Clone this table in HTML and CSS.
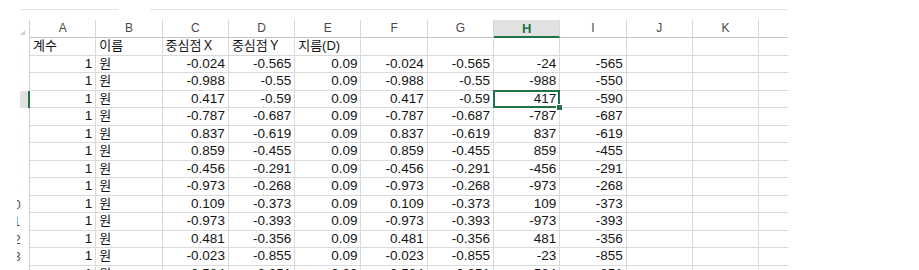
FILE: index.html
```html
<!DOCTYPE html>
<html lang="ko">
<head>
<meta charset="utf-8">
<title>Sheet</title>
<link rel="stylesheet" href="styles.css">
</head>
<body>
<div class="sheet">
  <div class="topbar"><span class="tline first"></span><span class="tline second"></span></div>
  <div class="grid">
    <div class="corner"><span class="tri"></span></div>
    <div class="ch">A</div><div class="ch">B</div><div class="ch">C</div><div class="ch">D</div><div class="ch">E</div><div class="ch">F</div><div class="ch">G</div><div class="ch sel">H</div><div class="ch">I</div><div class="ch">J</div><div class="ch">K</div><div class="ch"></div>

    <div class="rh">1</div><div class="c t">계수</div><div class="c t">이름</div><div class="c t">중심점Ｘ</div><div class="c t">중심점Ｙ</div><div class="c t">지름(D)</div><div class="c"></div><div class="c"></div><div class="c colsel"></div><div class="c"></div><div class="c"></div><div class="c"></div><div class="c"></div>

    <div class="rh">2</div><div class="c n">1</div><div class="c t">원</div><div class="c n">-0.024</div><div class="c n">-0.565</div><div class="c n">0.09</div><div class="c n">-0.024</div><div class="c n">-0.565</div><div class="c n">-24</div><div class="c n">-565</div><div class="c"></div><div class="c"></div><div class="c"></div>

    <div class="rh">3</div><div class="c n">1</div><div class="c t">원</div><div class="c n">-0.988</div><div class="c n">-0.55</div><div class="c n">0.09</div><div class="c n">-0.988</div><div class="c n">-0.55</div><div class="c n">-988</div><div class="c n">-550</div><div class="c"></div><div class="c"></div><div class="c"></div>

    <div class="rh sel">4</div><div class="c n">1</div><div class="c t">원</div><div class="c n">0.417</div><div class="c n">-0.59</div><div class="c n">0.09</div><div class="c n">0.417</div><div class="c n">-0.59</div><div class="c n active">417</div><div class="c n">-590</div><div class="c"></div><div class="c"></div><div class="c"></div>

    <div class="rh">5</div><div class="c n">1</div><div class="c t">원</div><div class="c n">-0.787</div><div class="c n">-0.687</div><div class="c n">0.09</div><div class="c n">-0.787</div><div class="c n">-0.687</div><div class="c n">-787</div><div class="c n">-687</div><div class="c"></div><div class="c"></div><div class="c"></div>

    <div class="rh">6</div><div class="c n">1</div><div class="c t">원</div><div class="c n">0.837</div><div class="c n">-0.619</div><div class="c n">0.09</div><div class="c n">0.837</div><div class="c n">-0.619</div><div class="c n">837</div><div class="c n">-619</div><div class="c"></div><div class="c"></div><div class="c"></div>

    <div class="rh">7</div><div class="c n">1</div><div class="c t">원</div><div class="c n">0.859</div><div class="c n">-0.455</div><div class="c n">0.09</div><div class="c n">0.859</div><div class="c n">-0.455</div><div class="c n">859</div><div class="c n">-455</div><div class="c"></div><div class="c"></div><div class="c"></div>

    <div class="rh">8</div><div class="c n">1</div><div class="c t">원</div><div class="c n">-0.456</div><div class="c n">-0.291</div><div class="c n">0.09</div><div class="c n">-0.456</div><div class="c n">-0.291</div><div class="c n">-456</div><div class="c n">-291</div><div class="c"></div><div class="c"></div><div class="c"></div>

    <div class="rh">9</div><div class="c n">1</div><div class="c t">원</div><div class="c n">-0.973</div><div class="c n">-0.268</div><div class="c n">0.09</div><div class="c n">-0.973</div><div class="c n">-0.268</div><div class="c n">-973</div><div class="c n">-268</div><div class="c"></div><div class="c"></div><div class="c"></div>

    <div class="rh">10</div><div class="c n">1</div><div class="c t">원</div><div class="c n">0.109</div><div class="c n">-0.373</div><div class="c n">0.09</div><div class="c n">0.109</div><div class="c n">-0.373</div><div class="c n">109</div><div class="c n">-373</div><div class="c"></div><div class="c"></div><div class="c"></div>

    <div class="rh">11</div><div class="c n">1</div><div class="c t">원</div><div class="c n">-0.973</div><div class="c n">-0.393</div><div class="c n">0.09</div><div class="c n">-0.973</div><div class="c n">-0.393</div><div class="c n">-973</div><div class="c n">-393</div><div class="c"></div><div class="c"></div><div class="c"></div>

    <div class="rh">12</div><div class="c n">1</div><div class="c t">원</div><div class="c n">0.481</div><div class="c n">-0.356</div><div class="c n">0.09</div><div class="c n">0.481</div><div class="c n">-0.356</div><div class="c n">481</div><div class="c n">-356</div><div class="c"></div><div class="c"></div><div class="c"></div>

    <div class="rh">13</div><div class="c n">1</div><div class="c t">원</div><div class="c n">-0.023</div><div class="c n">-0.855</div><div class="c n">0.09</div><div class="c n">-0.023</div><div class="c n">-0.855</div><div class="c n">-23</div><div class="c n">-855</div><div class="c"></div><div class="c"></div><div class="c"></div>

    <div class="rh">14</div><div class="c n">1</div><div class="c t">원</div><div class="c n">0.584</div><div class="c n">-0.851</div><div class="c n">0.09</div><div class="c n">0.584</div><div class="c n">-0.851</div><div class="c n">584</div><div class="c n">-851</div><div class="c"></div><div class="c"></div><div class="c"></div>
  </div>
  <div class="cover"></div>
</div>
</body>
</html>
```

FILE: styles.css
```css
html, body {
  margin: 0;
  padding: 0;
  background: #ffffff;
  overflow: hidden;
}

.sheet {
  position: relative;
  width: 919px;
  height: 270px;
  overflow: hidden;
  font-family: "Liberation Sans", "Noto Sans CJK KR", sans-serif;
  color: #141414;
}

.topbar {
  display: flex;
  height: 20px;
  padding-left: 20px;
  padding-top: 9px;
  box-sizing: border-box;
  gap: 32px;
}

.tline {
  display: block;
  height: 1px;
  background: #e2e2e2;
}
.tline.first { width: 98px; }
.tline.second { width: 638px; }

.grid {
  display: grid;
  width: 788px;
  overflow: hidden;
  grid-template-columns: 30px repeat(11, 66.3px) 40px;
  grid-template-rows: 18px;
  grid-auto-rows: 17.5px;
}

.corner {
  display: flex;
  align-items: flex-end;
  padding: 0 0 3px 20px;
  box-sizing: border-box;
  border-right: 1px solid #d0d0d0;
}

.tri {
  width: 0;
  height: 0;
  border-left: 5px solid transparent;
  border-bottom: 5px solid #cfcfcf;
}

.ch {
  display: flex;
  align-items: center;
  justify-content: center;
  font-size: 12px;
  color: #4a4a4a;
  border-right: 1px solid #d8d8d8;
  border-bottom: 1px solid #c4c4c4;
  box-sizing: border-box;
  padding-bottom: 1px;
}

.ch.sel {
  background: #e1e1e1;
  color: #217346;
  font-weight: bold;
  font-size: 13px;
  border-bottom: 2px solid #217346;
  padding-bottom: 0;
}

.rh {
  font-size: 13px;
  color: #555;
  text-align: center;
  padding-right: 2px;
  line-height: 17.5px;
  border-right: 1px solid #cfcfcf;
  box-sizing: border-box;
}

.rh.sel {
  background: linear-gradient(to right, transparent 20px, #e1e1e1 20px);
  border-right: 2px solid #217346;
}

.c {
  font-size: 13.5px;
  line-height: 16.5px;
  padding: 0 3px;
  white-space: nowrap;
  overflow: visible;
  border-right: 1px solid #dadada;
  border-bottom: 1px solid #dadada;
  box-sizing: border-box;
}

.c.n { text-align: right; }
.c.t { text-align: left; font-size: 13px; }

.active {
  position: relative;
}

.active::before {
  content: "";
  position: absolute;
  left: -1px;
  top: -1px;
  right: -1px;
  bottom: -1px;
  border: 2px solid #217346;
}

.active::after {
  content: "";
  position: absolute;
  right: -4px;
  bottom: -4px;
  width: 5px;
  height: 5px;
  background: #217346;
  border: 1px solid #ffffff;
}

.cover {
  position: absolute;
  left: 0;
  top: 0;
  width: 17px;
  height: 270px;
  background: #ffffff;
}
```
